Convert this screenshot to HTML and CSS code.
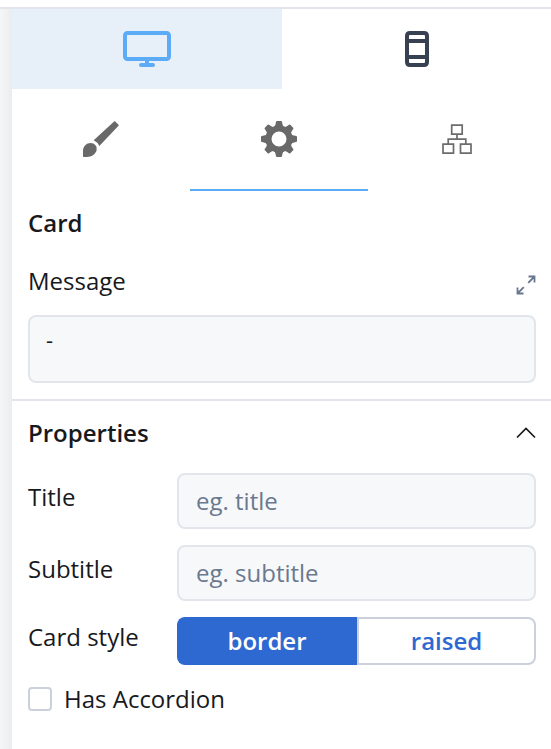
FILE: index.html
```html
<!DOCTYPE html>
<html lang="en">
<head>
<meta charset="utf-8">
<title>Card settings</title>
<link rel="stylesheet" href="styles.css">
</head>
<body>
<div class="workspace">
  <aside class="panel">
    <nav class="devices">
      <div class="device active">
        <svg width="48" height="38" viewBox="0 0 48 38"><rect x="2" y="2" width="44" height="26" rx="2.5" fill="none" stroke="#5babf7" stroke-width="4"/><path d="M22 29h4v3h-4z" fill="#5babf7"/><rect x="16" y="32" width="16" height="4" rx="2" fill="#5babf7"/></svg>
      </div>
      <div class="device">
        <svg width="24" height="36" viewBox="0 0 24 36"><path d="M5 2h14q3 0 3 3v26q0 3-3 3H5q-3 0-3-3V5q0-3 3-3zM2 10h20M2 26h20" fill="none" stroke="#374151" stroke-width="4"/></svg>
      </div>
    </nav>
    <nav class="tabs">
      <div class="tab">
        <svg width="36" height="36" viewBox="0 0 108 108" fill="#696969"><path d="M95 0l13 13-59 62q-6-12-17-17zM0 107V88C1 76 10 66 23 66q9 0 14 6 7 7 4 16C37 101 25 108 12 108 6 108 3 108 0 107z"/></svg>
      </div>
      <div class="tab selected">
        <svg width="36" height="36" viewBox="-18 -18 36 36" fill="#696969"><defs><path id="tooth" d="M-5.2-12Q-3.8-12.8-3.4-15L-3-17.2Q-2.8-18-2-18H2Q2.8-18 3-17.2L3.4-15Q3.8-12.8 5.2-12L5-8H-5z"/></defs><circle r="10.5" fill="none" stroke="#696969" stroke-width="6"/><use href="#tooth"/><use href="#tooth" transform="rotate(45)"/><use href="#tooth" transform="rotate(90)"/><use href="#tooth" transform="rotate(135)"/><use href="#tooth" transform="rotate(180)"/><use href="#tooth" transform="rotate(225)"/><use href="#tooth" transform="rotate(270)"/><use href="#tooth" transform="rotate(315)"/></svg>
      </div>
      <div class="tab">
        <svg width="30" height="30" viewBox="0 0 30 30" fill="none" stroke="#6c6c6c" stroke-width="1.7"><path d="M9.7 1.1h10.5v9H9.7zM1 20.2h10.5v9H1zM18.5 20.2H29v9H18.5zM15 10v5.1M6.2 20v-4.9h17.6V20"/></svg>
      </div>
    </nav>
    <section class="message">
      <h2>Card</h2>
      <div class="message-head">
        <span>Message</span>
        <svg width="20" height="20" viewBox="0 0 20 20" fill="none" stroke="#68778d" stroke-width="1.8"><path d="M12.2 7.8L18.5 1.5M12.5 1.5h6v6M7.8 12.2l-6.3 6.3M1.5 12.5v6h6"/></svg>
      </div>
      <div class="textarea">-</div>
    </section>
    <section class="properties">
      <div class="section-head">
        <h2>Properties</h2>
        <svg width="20" height="12" viewBox="0 0 20 12" fill="none" stroke="#17191c" stroke-width="1.7"><path d="M1 10.5l9-9 9 9"/></svg>
      </div>
      <div class="field"><label for="title">Title</label><input id="title" placeholder="eg. title"></div>
      <div class="field"><label for="subtitle">Subtitle</label><input id="subtitle" placeholder="eg. subtitle"></div>
      <div class="field style-field"><span class="style-label">Card style</span><div class="segments"><button class="on">border</button><button>raised</button></div></div>
      <label class="check"><span class="box"></span>Has Accordion</label>
    </section>
  </aside>
</div>
</body>
</html>
```

FILE: styles.css
```css
* { box-sizing: border-box; }
body {
  margin: 0;
  padding-top: 7px;
  height: 749px;
  overflow: hidden;
  background: #fff;
  color: #17191c;
  font: 24px/32px "Open Sans", sans-serif;
}
.workspace {
  height: 742px;
  padding-left: 12px;
  border-top: 2px solid #e2e6ec;
  background: linear-gradient(to right, #f4f5f7 0, #f2f3f5 4px, #ebecee 12px);
}
.panel { width: 540px; height: 740px; background: #fff; }
.devices { display: flex; height: 80px; }
.device { flex: 1; display: flex; align-items: center; justify-content: center; }
.device.active { background: #e7f0f9; }
svg { display: block; }
.device.active svg { margin-top: 2px; }
.tabs { display: flex; height: 102px; }
.tab { width: 178px; display: flex; align-items: center; justify-content: center; border-bottom: 2px solid transparent; }
.selected { border-color: #5babf7; }
h2 { margin: 0; font-size: 24px; line-height: 32px; font-weight: 600; }
.message { height: 210px; padding: 16px 16px 0; border-bottom: 2px solid #e2e6ec; }
.message-head { display: flex; align-items: center; justify-content: space-between; height: 32px; margin-top: 26px; }
.message-head svg { margin-top: 8px; }
.textarea {
  height: 68px;
  margin-top: 18px;
  padding: 7px 16px;
  border: 2px solid #e2e6ec;
  border-radius: 8px;
  background: #f6f8fa;
  font-size: 22px;
  line-height: 31px;
}
.properties { padding: 16px 16px 0; }
.section-head { display: flex; align-items: center; justify-content: space-between; }
.field { display: grid; grid-template-columns: 149px 1fr; margin-top: 16px; }
.section-head + .field { margin-top: 24px; }
.field label { padding-top: 8px; }
input {
  width: 100%;
  height: 56px;
  padding: 0 16px 2px 17px;
  border: 2px solid #e2e6ec;
  border-radius: 8px;
  background: #f6f8fa;
  color: inherit;
  font: inherit;
}
input::placeholder { color: #6b788e; opacity: 1; }
.style-label { padding-top: 4px; }
.segments { display: grid; grid-template-columns: 180px 179px; height: 48px; }
button {
  padding: 0;
  border: 2px solid #cbd0dc;
  border-radius: 0 8px 8px 0;
  background: #fff;
  color: #2e69d1;
  font: 600 24px/32px "Open Sans", sans-serif;
}
button.on { padding-right: 2px; border-color: #2e69d1; border-right-width: 0; border-radius: 8px 0 0 8px; background: #2e69d1; color: #fff; }
.check { display: flex; align-items: center; gap: 12px; margin-top: 18px; }
.box { width: 24px; height: 24px; border: 2px solid #cbd0dc; border-radius: 4px; }
```
